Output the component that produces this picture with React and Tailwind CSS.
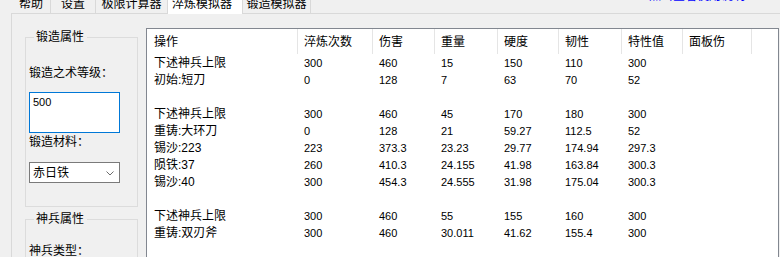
import React from 'react';

const tabs = [
  { label: '帮助', w: 'w-[39px]' },
  { label: '设置', w: 'w-[45px]' },
  { label: '极限计算器', w: 'w-[72px]' },
  { label: '淬炼模拟器', w: 'w-[75px]', active: true },
  { label: '锻造模拟器', w: 'w-[68px]' },
];

const columns = ['操作', '淬炼次数', '伤害', '重量', '硬度', '韧性', '特性值', '面板伤'];

const rows = [
  ['下述神兵上限', '300', '460', '15', '150', '110', '300'],
  ['初始:短刀', '0', '128', '7', '63', '70', '52'],
  null,
  ['下述神兵上限', '300', '460', '45', '170', '180', '300'],
  ['重铸:大环刀', '0', '128', '21', '59.27', '112.5', '52'],
  ['锡沙:223', '223', '373.3', '23.23', '29.77', '174.94', '297.3'],
  ['陨铁:37', '260', '410.3', '24.155', '41.98', '163.84', '300.3'],
  ['锡沙:40', '300', '454.3', '24.555', '31.98', '175.04', '300.3'],
  null,
  ['下述神兵上限', '300', '460', '55', '155', '160', '300'],
  ['重铸:双刃斧', '300', '460', '30.011', '41.62', '155.4', '300'],
];

const gridCols = 'grid grid-cols-[151px_75px_62px_63px_61px_63px_61px_69px_1fr]';

function GroupBox({ title, className = '', children }) {
  return (
    <fieldset className={`border border-[#dcdcdc] w-[113px] px-[3px] ${className}`}>
      <legend className="ml-[5px] pl-[2px] pr-[3px] leading-[14px]">{title}</legend>
      {children}
    </fieldset>
  );
}

export default function App() {
  return (
    <div
      className="w-[780px] h-[257px] overflow-hidden bg-[#f0f0f0] text-[12px] text-black flex flex-col"
      style={{ fontFamily: '"Liberation Sans", "Noto Sans CJK SC", sans-serif' }}
    >
      {/* tab strip */}
      <div className="h-[13px] flex pl-[12px] shrink-0">
        {tabs.map(t => (
          <div
            key={t.label}
            className={`${t.w} h-[14px] border-r border-[#d9d9d9] flex ${
              t.active ? 'bg-white justify-start pl-[4px] relative z-10' : 'justify-center'
            }`}
          >
            <span className="block -mt-[2px] leading-[13px]">{t.label}</span>
          </div>
        ))}
        <div className="ml-auto mr-[35px] -mt-[10px] leading-[13px] text-[#0000ff]">点击查看使用说明</div>
      </div>

      {/* tab page */}
      <div className="ml-[11px] flex-1 border-l border-t border-[#d9d9d9] flex items-start">
        {/* left column */}
        <div className="pl-[13px] mt-[16px] flex flex-col">
          <GroupBox title="锻造属性" className="pt-[21px] pb-[23px]">
            <div className="leading-[16px]">锻造之术等级：</div>
            <div className="mt-[11px] h-[41px] w-[91px] border border-[#0078d7] bg-white pl-[3px] pt-[2px] text-[11px] leading-[14px]">
              500
            </div>
            <div className="mt-[1px] leading-[16px]">锻造材料：</div>
            <div className="mt-[12px] h-[21px] w-[91px] border border-[#7a7a7a] bg-white flex items-center justify-between pl-[3px] pr-[5px]">
              <span className="leading-[16px]">赤日铁</span>
              <svg width="8" height="5" viewBox="0 0 8 5" className="mt-[1px]">
                <polyline points="0.5,0.5 4,4 7.5,0.5" fill="none" stroke="#6d6d6d" strokeWidth="1" />
              </svg>
            </div>
          </GroupBox>
          <GroupBox title="神兵属性" className="mt-[5px] pt-[17px] pb-[20px]">
            <div className="leading-[16px]">神兵类型：</div>
          </GroupBox>
        </div>

        {/* list view */}
        <div className="ml-[8px] mt-[14px] w-[633px] h-[240px] border border-[#828790] bg-white">
          <div className={`${gridCols} h-[25px]`}>
            {columns.map((c, i) => (
              <div
                key={c}
                className={`border-r border-[#e5e5e5] flex items-center leading-[16px] ${i === 0 ? 'pl-[7px]' : 'pl-[6px]'}`}
              >
                {c}
              </div>
            ))}
            <div />
          </div>
          {rows.map((r, ri) => (
            <div key={ri} className={`${gridCols} h-[17px] items-center`}>
              {r &&
                r.map((v, i) => (
                  <div
                    key={i}
                    className={
                      i === 0
                        ? 'pl-[7px] leading-[16px]'
                        : 'pl-[6px] text-[11px] leading-[16px]'
                    }
                  >
                    {v}
                  </div>
                ))}
            </div>
          ))}
        </div>
      </div>
    </div>
  );
}
